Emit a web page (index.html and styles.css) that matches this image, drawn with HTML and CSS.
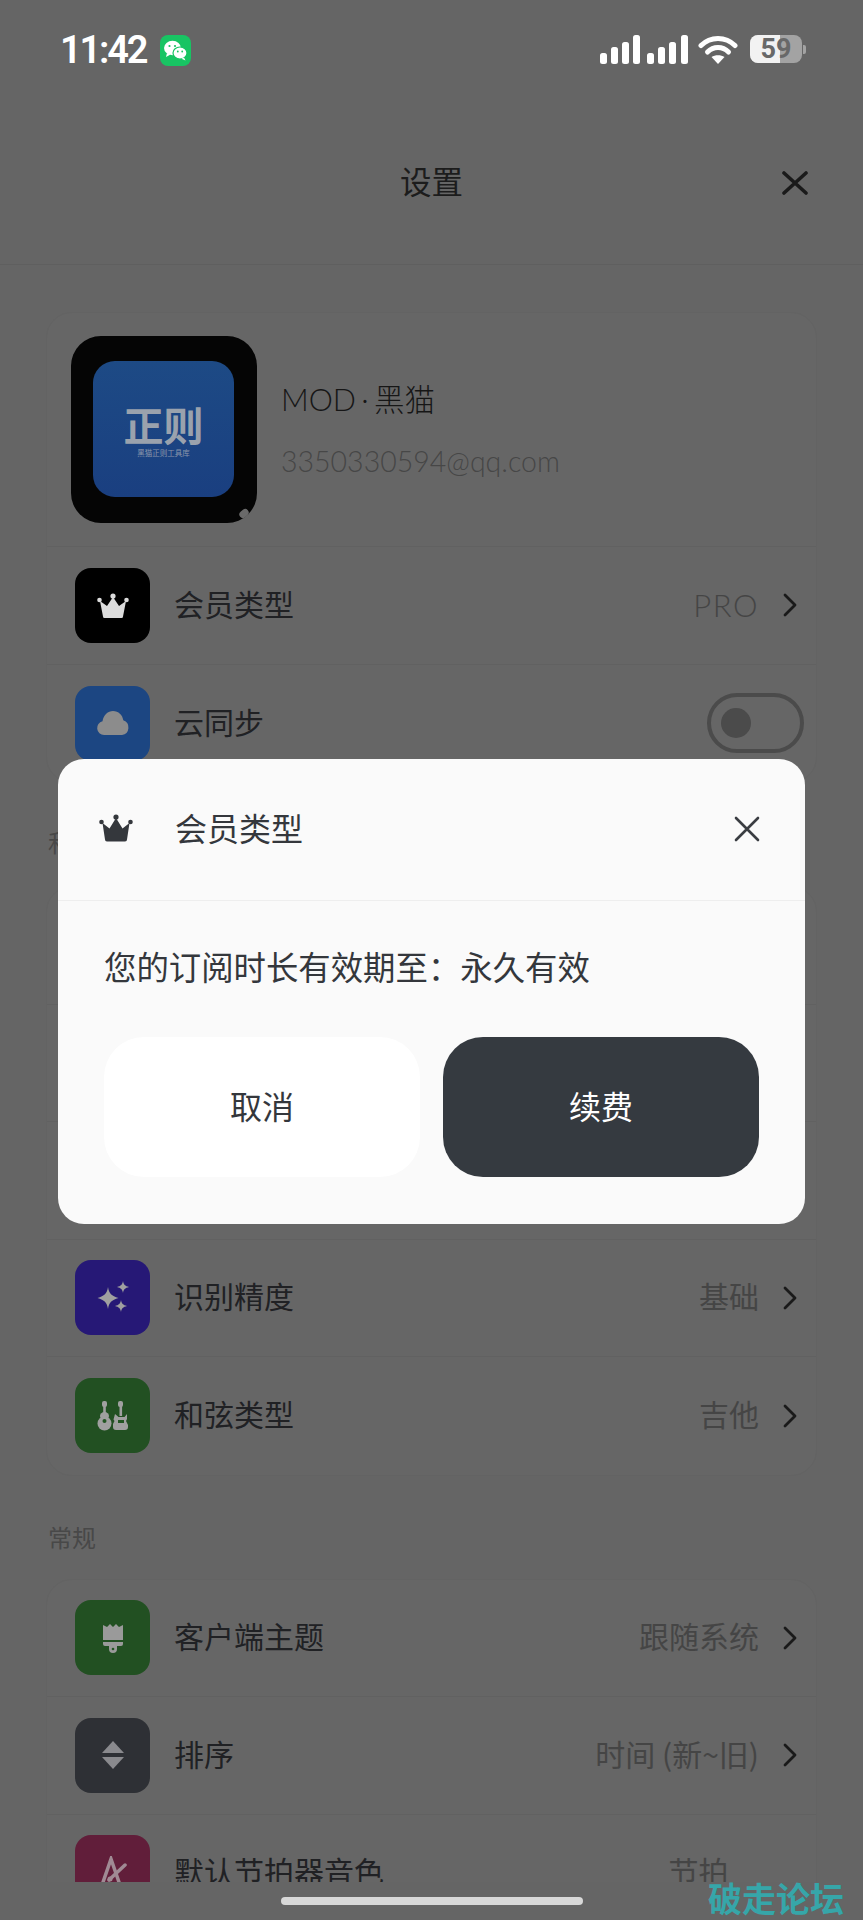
FILE: index.html
```html
<!DOCTYPE html>
<html lang="zh-CN">
<head>
<meta charset="utf-8">
<title>设置</title>
<link rel="stylesheet" href="styles.css">
</head>
<body>
<div class="screen">
  <div class="status">
    <div class="status-left">
      <span class="time">11:42</span>
      <span class="wechat">
        <svg viewBox="0 0 31 30" width="31" height="30"><ellipse cx="12.5" cy="13" rx="8.5" ry="7.2" fill="#fff"/><path d="M7 18l-1 4 4.500-2.500z" fill="#fff"/><ellipse cx="20" cy="18" rx="7" ry="6" fill="#fff" stroke="#18c463" stroke-width="1.200"/><path d="M24 22.500l1.500 3-4-1.800z" fill="#fff"/><circle cx="9.500" cy="11" r="1.100" fill="#18c463"/><circle cx="15" cy="11" r="1.100" fill="#18c463"/><circle cx="17.800" cy="16.500" r=".9" fill="#18c463"/><circle cx="22.200" cy="16.500" r=".9" fill="#18c463"/></svg>
      </span>
    </div>
    <div class="status-right">
      <svg class="signal" viewBox="0 0 88 29" width="88" height="29" fill="#fff">
        <rect x="0" y="18" width="7" height="11" rx="2.500"/><rect x="11" y="12" width="7" height="17" rx="2.500"/><rect x="22" y="7" width="7" height="22" rx="2.500"/><rect x="33" y="0" width="7" height="29" rx="2.500"/>
        <rect x="47" y="18" width="7" height="11" rx="2.500"/><rect x="58" y="12" width="7" height="17" rx="2.500"/><rect x="69" y="7" width="7" height="22" rx="2.500"/><rect x="81" y="0" width="7" height="29" rx="2.500"/>
      </svg>
      <svg class="wifi" viewBox="0 0 40 30" width="40" height="30" fill="none" stroke="#fff" stroke-linecap="round" stroke-width="5">
        <path d="M3 10.500C12.500 1 27.500 1 37 10.500"/><path d="M9.500 17C15.500 11 24.500 11 30.500 17"/><path d="M20 29l-6.500-7c3.500-2.500 9.500-2.500 13 0z" fill="#fff" stroke="none"/>
      </svg>
      <div class="battery">
        <span class="battery-level"></span>
        <span class="battery-text">59</span>
        <span class="battery-nub"></span>
      </div>
    </div>
  </div>

  <header class="topbar">
    <h1 class="topbar-title">设置</h1>
    <svg class="topbar-close" viewBox="0 0 26 24" width="26" height="24" fill="none" stroke="#1a1a1a" stroke-width="3.600" stroke-linecap="round"><path d="M2 2l22 20M24 2L2 22"/></svg>
  </header>

  <main class="scroll">
    <section class="card">
      <div class="profile">
        <div class="avatar">
          <div class="avatar-inner">
            <span class="avatar-logo">正则</span>
            <span class="avatar-sub">黑猫正则工具库</span>
          </div>
          <span class="avatar-mark"></span>
        </div>
        <div class="profile-text">
          <div class="profile-name">MOD · 黑猫</div>
          <div class="profile-mail">3350330594@qq.com</div>
        </div>
      </div>
      <div class="row">
        <span class="tile tile-black">
          <svg viewBox="0 0 32 25" width="32" height="25" fill="#dcdcdc"><path d="M3 8l7 5 6-9 6 9 7-5-3 15.500a1.500 1.500 0 0 1-1.500 1.500h-17A1.500 1.500 0 0 1 6 23.500z"/><circle cx="16" cy="3" r="2.600"/><circle cx="2.500" cy="7" r="2.300"/><circle cx="29.500" cy="7" r="2.300"/></svg>
        </span>
        <span class="row-title">会员类型</span>
        <span class="row-value latin">PRO</span>
        <svg class="chevron" viewBox="0 0 14 24" width="14" height="24" fill="none" stroke="#1a1a1a" stroke-width="2.800" stroke-linecap="round" stroke-linejoin="round"><path d="M2 2l10 10L2 22"/></svg>
      </div>
      <div class="row row-last">
        <span class="tile tile-blue">
          <svg viewBox="0 0 34 26" width="34" height="26"><path d="M8 25a7 7 0 0 1-1.500-13.800C7.500 5 12 1 17 1c5.500 0 9.500 4 10.300 9.300A7.600 7.600 0 0 1 26 25z" fill="#8c8c8c"/></svg>
        </span>
        <span class="row-title">云同步</span>
        <span class="toggle"><span class="toggle-knob"></span></span>
      </div>
    </section>

    <h2 class="section-label">和弦</h2>
    <section class="card">
      <div class="row"></div>
      <div class="row"></div>
      <div class="row"></div>
      <div class="row">
        <span class="tile tile-purple">
          <svg viewBox="0 0 34 34" width="34" height="34" fill="#a0a0a0"><path d="M12 6c1 6.500 3.500 9 10.500 11C15.500 19 13 21.500 12 28 11 21.500 8.500 19 1.500 17 8.500 15 11 12.500 12 6z"/><path d="M27 0c.6 3.500 2 5 6 6-4 1-5.400 2.500-6 6-.6-3.500-2-5-6-6 4-1 5.400-2.500 6-6z"/><path d="M25 19c.6 3.500 2 5 6 6-4 1-5.400 2.500-6 6-.6-3.500-2-5-6-6 4-1 5.400-2.500 6-6z"/></svg>
        </span>
        <span class="row-title">识别精度</span>
        <span class="row-value">基础</span>
        <svg class="chevron" viewBox="0 0 14 24" width="14" height="24" fill="none" stroke="#1a1a1a" stroke-width="2.800" stroke-linecap="round" stroke-linejoin="round"><path d="M2 2l10 10L2 22"/></svg>
      </div>
      <div class="row row-last">
        <span class="tile tile-green">
          <svg viewBox="0 0 32 30" width="32" height="30" fill="#a0a0a0"><rect x="5" y="0" width="5" height="6" rx="2"/><rect x="6.200" y="5" width="2.600" height="9"/><ellipse cx="7.500" cy="15" rx="4.500" ry="4"/><ellipse cx="7.500" cy="22.500" rx="7" ry="7"/><rect x="21" y="0" width="5" height="6" rx="2"/><rect x="22.500" y="5" width="2.600" height="10"/><path d="M18 13l3.500 3h6l2.500-3v5l-1 2 2 4v2a3 3 0 0 1-3 3h-9a3 3 0 0 1-3-3v-3l1.500-3-1-1.500z"/><circle cx="7.500" cy="20" r="2" fill="#225522"/><rect x="21" y="19" width="6" height="3" fill="#225522"/></svg>
        </span>
        <span class="row-title">和弦类型</span>
        <span class="row-value">吉他</span>
        <svg class="chevron" viewBox="0 0 14 24" width="14" height="24" fill="none" stroke="#1a1a1a" stroke-width="2.800" stroke-linecap="round" stroke-linejoin="round"><path d="M2 2l10 10L2 22"/></svg>
      </div>
    </section>

    <h2 class="section-label section-label-general">常规</h2>
    <section class="card">
      <div class="row">
        <span class="tile tile-green">
          <svg viewBox="0 0 22 30" width="22" height="30" fill="#9a9a9a"><path d="M1 2l4 2 3-3 3 3 3-3 3 3 4-2v15H1z"/><path d="M1 19h20v2a2 2 0 0 1-2 2h-4v3a4 4 0 0 1-8 0v-3H3a2 2 0 0 1-2-2z"/><circle cx="11" cy="26" r="1.300" fill="#225522"/></svg>
        </span>
        <span class="row-title">客户端主题</span>
        <span class="row-value">跟随系统</span>
        <svg class="chevron" viewBox="0 0 14 24" width="14" height="24" fill="none" stroke="#1a1a1a" stroke-width="2.800" stroke-linecap="round" stroke-linejoin="round"><path d="M2 2l10 10L2 22"/></svg>
      </div>
      <div class="row">
        <span class="tile tile-slate">
          <svg viewBox="0 0 24 30" width="24" height="30" fill="#8a8a8e"><path d="M12 1l11 12H1z"/><path d="M1 17h22L12 29z"/></svg>
        </span>
        <span class="row-title">排序</span>
        <span class="row-value">时间 (新~旧)</span>
        <svg class="chevron" viewBox="0 0 14 24" width="14" height="24" fill="none" stroke="#1a1a1a" stroke-width="2.800" stroke-linecap="round" stroke-linejoin="round"><path d="M2 2l10 10L2 22"/></svg>
      </div>
      <div class="row">
        <span class="tile tile-wine">
          <svg viewBox="0 0 30 34" width="30" height="34" fill="none" stroke="#a08a94" stroke-width="3.500" stroke-linecap="round"><path d="M3 32L13 3l10 29"/><path d="M11 24L27 9"/><circle cx="12" cy="23" r="2.500" fill="#a08a94" stroke="none"/></svg>
        </span>
        <span class="row-title">默认节拍器音色</span>
        <span class="row-value row-value-inset">节拍</span>
      </div>
    </section>
  </main>

  <footer class="bottom">
    <span class="home-bar"></span>
  </footer>

  <div class="modal">
    <div class="modal-head">
      <svg class="modal-crown" viewBox="0 0 34 28" width="34" height="28" fill="#34373c"><path d="M3.500 9l7 5.500L17 4l6.500 10.500 7-5.500-2.500 16.500a2 2 0 0 1-2 2H8a2 2 0 0 1-2-2z"/><circle cx="17" cy="3" r="2.600"/><circle cx="2.500" cy="8" r="2.300"/><circle cx="31.500" cy="8" r="2.300"/></svg>
      <span class="modal-title">会员类型</span>
      <svg class="modal-close" viewBox="0 0 26 26" width="26" height="26" fill="none" stroke="#3a3d42" stroke-width="2.600" stroke-linecap="round"><path d="M2 2l22 22M24 2L2 24"/></svg>
    </div>
    <div class="modal-body">
      <p class="modal-text">您的订阅时长有效期至：永久有效</p>
      <div class="modal-actions">
        <button class="btn btn-light">取消</button>
        <button class="btn btn-dark">续费</button>
      </div>
    </div>
  </div>

  <div class="watermark">破走论坛</div>
</div>
</body>
</html>
```
FILE: styles.css
```css
* { box-sizing: border-box; }
html, body { margin: 0; padding: 0; background: #656565; }
body {
  font-family: "Noto Sans CJK SC", "Noto Sans", sans-serif;
  color: #202124;
}
.screen {
  position: relative;
  width: 863px;
  height: 1920px;
  overflow: hidden;
  display: flex;
  flex-direction: column;
  background: #656565;
}

/* status bar */
.status {
  height: 100px;
  flex: none;
  display: flex;
  justify-content: space-between;
  align-items: flex-start;
  padding: 34px 58px 0 60px;
}
.status-left { display: flex; align-items: center; gap: 14px; }
.time {
  font-family: "Roboto", sans-serif;
  font-weight: 600;
  font-size: 38px;
  line-height: 32px;
  letter-spacing: -2.200px;
  color: #fff;
}
.wechat {
  width: 31px;
  height: 31px;
  border-radius: 8px;
  background: #18c463;
  display: flex;
}
.status-right { display: flex; align-items: flex-start; padding-top: 1px; }
.signal { margin-right: 10px; }
.wifi { margin-right: 12px; }
.battery {
  position: relative;
  width: 52px;
  height: 28px;
  border-radius: 8px;
  background: #a3a3a3;
  margin-right: 3px;
  display: flex;
  align-items: center;
  justify-content: center;
}
.battery-level {
  position: absolute;
  left: 0;
  top: 0;
  bottom: 0;
  width: 30px;
  border-radius: 8px 0 0 8px;
  background: #f2f2f2;
}
.battery-text {
  position: relative;
  font-family: "Roboto", sans-serif;
  font-weight: 700;
  font-size: 27px;
  line-height: 28px;
  color: #686868;
}
.battery-nub {
  position: absolute;
  right: -4px;
  top: 10px;
  width: 3px;
  height: 9px;
  border-radius: 0 2px 2px 0;
  background: #a3a3a3;
}

/* header */
.topbar {
  height: 165px;
  flex: none;
  display: flex;
  align-items: center;
  justify-content: center;
  position: relative;
  border-bottom: 1px solid #5f5f5f;
}
.topbar-title {
  margin: 0 0 5px;
  font-size: 31.500px;
  font-weight: 400;
  color: #1c1c1c;
}
.topbar-close {
  position: absolute;
  right: 55px;
  top: 71px;
}

/* list */
.scroll {
  height: 1617px;
  flex: none;
  overflow: hidden;
  padding: 47px 46px 0;
}
.card {
  background: #666666;
  border: 1px solid #636363;
  border-radius: 26px;
}
.profile {
  height: 234px;
  display: flex;
  align-items: center;
  padding: 0 0 1px 24px;
  gap: 24px;
  border-bottom: 1px solid #616161;
}
.avatar {
  position: relative;
  width: 186px;
  height: 187px;
  flex: none;
  border-radius: 30px;
  background: #050505;
  display: flex;
  align-items: center;
  justify-content: center;
}
.avatar-inner {
  width: 141px;
  height: 136px;
  margin-right: 1px;
  border-radius: 22px;
  background: linear-gradient(#1d4a85, #1a3f80);
  display: flex;
  flex-direction: column;
  align-items: center;
  justify-content: center;
}
.avatar-logo {
  font-size: 40px;
  line-height: 46px;
  font-weight: 700;
  color: #9aa2ad;
}
.avatar-sub {
  font-size: 7.500px;
  line-height: 11px;
  color: #8c97ab;
}
.avatar-mark {
  position: absolute;
  right: 8px;
  bottom: 6px;
  width: 10px;
  height: 7px;
  border-radius: 5px;
  background: #6a6a6a;
  transform: rotate(-40deg);
}
.profile-text { display: flex; flex-direction: column; gap: 22px; margin-top: 2px; }
.profile-name {
  font-family: "Lato", "Noto Sans CJK SC", sans-serif;
  font-size: 30.500px;
  line-height: 40px;
  font-weight: 300;
  word-spacing: -3px;
  color: #161616;
}
.profile-mail {
  font-family: "Lato", sans-serif;
  font-size: 28.500px;
  line-height: 40px;
  font-weight: 300;
  color: #474747;
}
.row {
  height: 117.500px;
  display: flex;
  align-items: center;
  padding: 0 19px 0 28px;
  border-bottom: 1px solid #616161;
}
.row-last { border-bottom: 0; }
.tile {
  width: 75px;
  height: 75px;
  flex: none;
  border-radius: 16px;
  display: flex;
  align-items: center;
  justify-content: center;
  margin-right: 24px;
}
.tile-black { background: #000; }
.tile-blue { background: #1c4682; }
.tile-purple { background: #261876; }
.tile-green { background: #225022; }
.tile-slate { background: #2e3035; }
.tile-wine { background: #611e3a; }
.row-title {
  flex: 1;
  font-size: 30px;
  line-height: 40px;
  padding-bottom: 5px;
  color: #202124;
}
.row-value {
  font-size: 30px;
  line-height: 40px;
  padding-bottom: 5px;
  color: #454545;
  margin-right: 24px;
}
.row-value.latin {
  font-family: "Lato", sans-serif;
  font-weight: 300;
  font-size: 31px;
  letter-spacing: 1.500px;
  padding-bottom: 0;
}
.row-value-inset { margin-right: 68.500px; }
.chevron { flex: none; }
.toggle {
  width: 97px;
  height: 60px;
  border: 4.500px solid #4b4b4b;
  border-radius: 30px;
  margin-right: -7px;
  display: flex;
  align-items: center;
  padding-left: 10px;
}
.toggle-knob {
  width: 30px;
  height: 30px;
  border-radius: 50%;
  background: #4b4b4b;
}
.section-label {
  margin: 42px 0 25px 2px;
  padding-bottom: 3px;
  font-size: 24px;
  line-height: 33px;
  font-weight: 400;
  color: #484848;
}
.section-label-general { margin-top: 44px; margin-bottom: 23px; }

/* bottom */
.bottom {
  flex: 1;
  display: flex;
  justify-content: center;
  padding-top: 15px;
}
.home-bar {
  width: 302px;
  height: 8px;
  border-radius: 4px;
  background: #d8d8d8;
}

/* modal */
.modal {
  position: absolute;
  left: 58px;
  top: 759px;
  width: 747px;
  height: 465px;
  border-radius: 26px;
  background: #fafafa;
  display: flex;
  flex-direction: column;
}
.modal-head {
  height: 142px;
  flex: none;
  display: flex;
  align-items: center;
  padding: 0 45px 1px 41px;
  border-bottom: 1px solid #eeeeee;
}
.modal-crown { margin-right: 42px; margin-top: -3px; }
.modal-title {
  flex: 1;
  font-size: 32px;
  line-height: 42px;
  color: #34373c;
  margin-top: -5px;
}
.modal-close { margin-top: -1px; }
.modal-body {
  flex: 1;
  display: flex;
  flex-direction: column;
  padding: 43px 46px 47px;
}
.modal-text {
  margin: 0;
  font-size: 32.400px;
  line-height: 44px;
  color: #34373c;
}
.modal-actions {
  margin-top: auto;
  display: grid;
  grid-template-columns: 1fr 1fr;
  gap: 23px;
}
.btn {
  height: 140px;
  border: 0;
  padding: 0 0 5px;
  border-radius: 40px;
  font-family: inherit;
  font-size: 32px;
}
.btn-light { background: #fff; color: #34373c; }
.btn-dark { background: #353a40; color: #fff; }

.watermark {
  position: absolute;
  left: 708px;
  top: 1875px;
  font-size: 34px;
  line-height: 46px;
  font-weight: 700;
  color: #36a6a9;
}
```
